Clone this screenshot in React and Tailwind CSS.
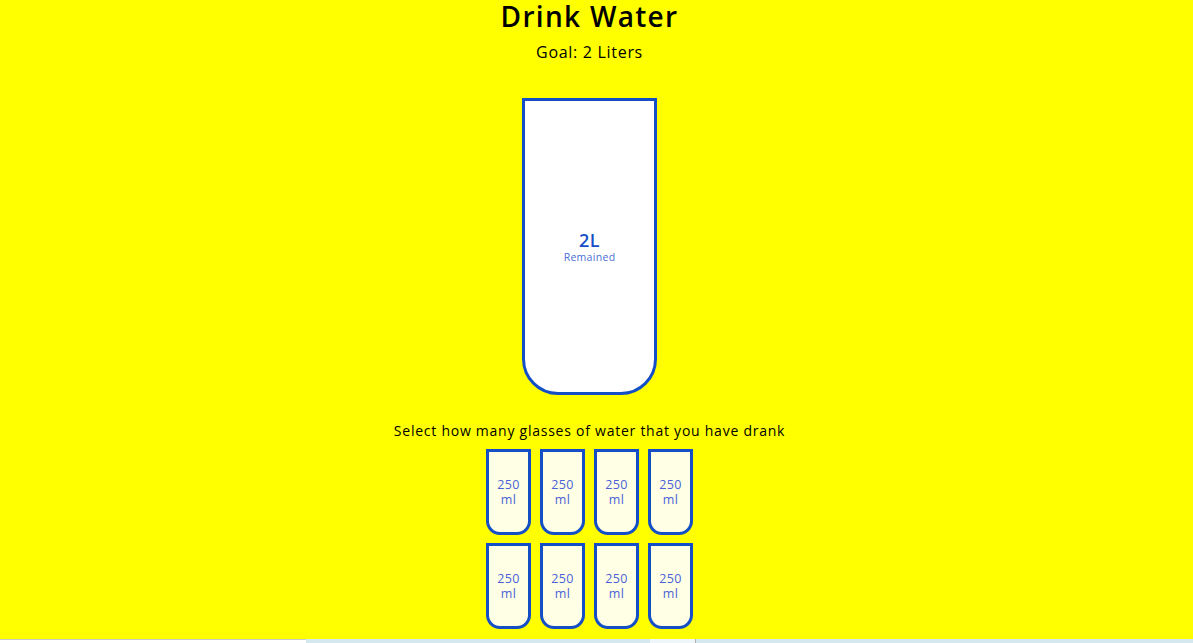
import React, { useState } from 'react';

const SMALL_CUPS = 8;

const App = () => {
    const [full, setFull] = useState(0);

    const remainedLiters = 2 - (full * 250) / 1000;

    return (
        <div className="w-[1193px] h-[643px] overflow-hidden flex flex-col bg-[#ffff00]" style={{ fontFamily: '"Open Sans", "Liberation Sans", sans-serif' }}>
            <div className="h-[639px] flex flex-col items-center pr-[14px] text-black">
                <h1 className="text-[28px] leading-[33px] font-semibold tracking-[1.3px]">Drink Water</h1>
                <h3 className="mt-[9px] text-[16px] leading-[20px] font-normal tracking-[0.7px]">Goal: 2 Liters</h3>

                {/* Big cup */}
                <div className="mt-[36px] w-[135px] h-[297px] bg-white border-[3.5px] border-[#144fc6] rounded-b-[36px] flex flex-col items-center justify-center text-[#144fc6]">
                    <span className="text-[18px] leading-[20px] font-semibold tracking-[0.5px]">{remainedLiters}L</span>
                    <small className="text-[10.5px] leading-[14px] tracking-[0.3px] text-[#4a6fd6]">Remained</small>
                </div>

                <p className="mt-[26px] text-[14px] leading-[20px] tracking-[0.75px]">Select how many glasses of water that you have drank</p>

                {/* Small cups */}
                <div className="mt-[8px] grid grid-cols-4 gap-x-[9px] gap-y-[8px]">
                    {[...Array(SMALL_CUPS)].map((_, i) => (
                        <div
                            key={i}
                            onClick={() => setFull(i + 1 === full ? i : i + 1)}
                            className={`w-[45px] h-[86px] border-[3px] border-[#144fc6] rounded-b-[14px] flex items-center justify-center text-center text-[12.5px] leading-[15px] tracking-[0.4px] cursor-pointer ${i < full ? 'bg-[#6ab3f8] text-white' : 'bg-[#ffffe6] text-[#4a5fd8]'}`}
                        >
                            250<br />ml
                        </div>
                    ))}
                </div>
            </div>

            {/* bottom strip */}
            <div className="h-[4px] flex">
                <div className="w-[306px] bg-white border-t border-[#c8c8c8]"></div>
                <div className="w-[344px] bg-[#d5e8f0]"></div>
                <div className="w-[45px] bg-[#eef6f9]"></div>
                <div className="w-px bg-[#b0b0b0]"></div>
                <div className="flex-1 bg-[#d5e8f0]"></div>
            </div>
        </div>
    );
};

export default App;
